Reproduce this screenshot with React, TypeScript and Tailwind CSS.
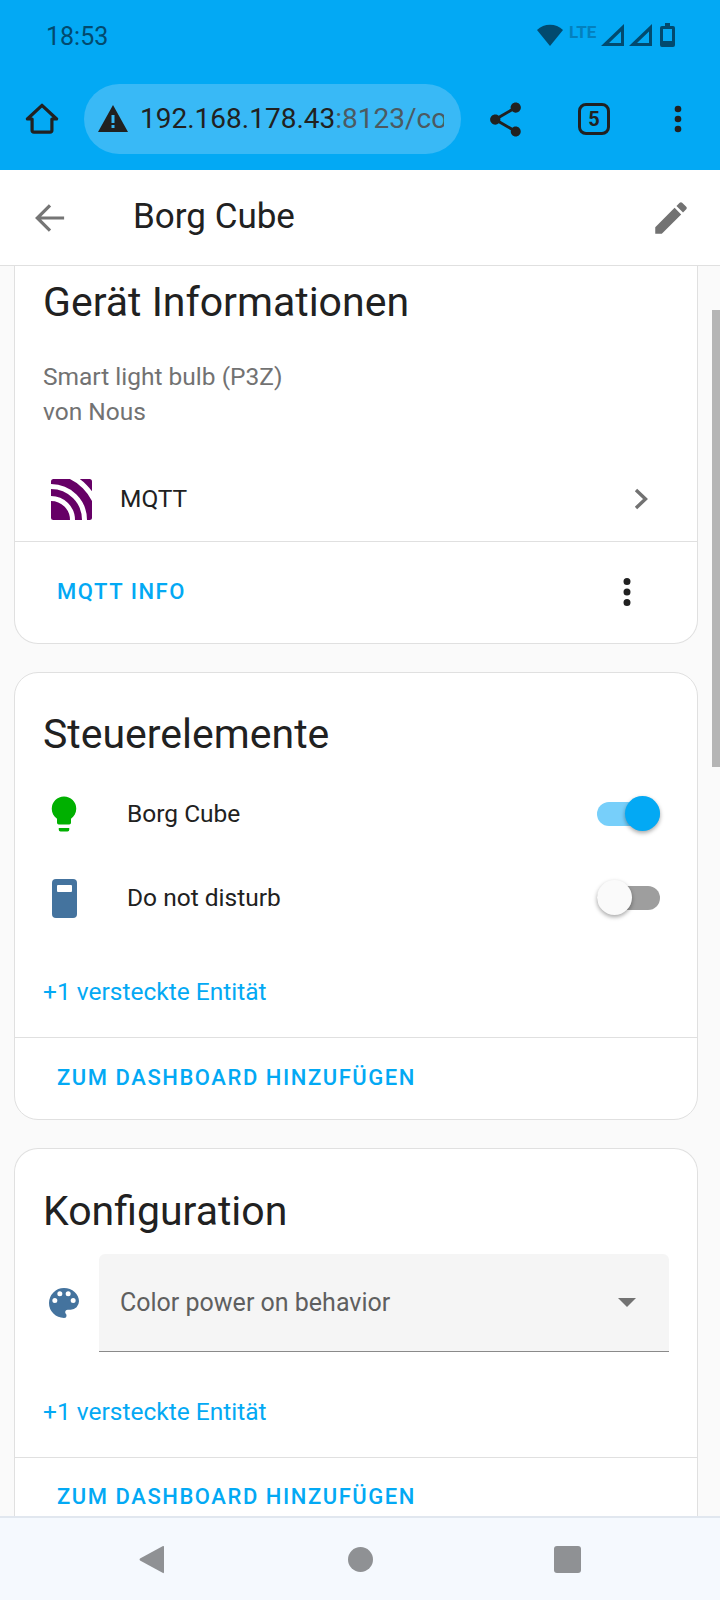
import React from 'react';

const PATHS = {
  share: 'M18 16.08c-.76 0-1.44.3-1.96.77L8.91 12.7c.05-.23.09-.46.09-.7s-.04-.47-.09-.7l7.05-4.11c.54.5 1.25.81 2.04.81 1.66 0 3-1.34 3-3s-1.34-3-3-3-3 1.34-3 3c0 .24.04.47.09.7L8.04 9.81C7.5 9.31 6.79 9 6 9c-1.66 0-3 1.34-3 3s1.34 3 3 3c.79 0 1.5-.31 2.04-.81l7.12 4.16c-.05.21-.08.43-.08.65 0 1.61 1.31 2.92 2.92 2.92 1.61 0 2.92-1.31 2.92-2.92s-1.31-2.92-2.92-2.92z',
  pencil: 'M20.71,7.04C21.1,6.65 21.1,6 20.71,5.63L18.37,3.29C18,2.9 17.35,2.9 16.96,3.29L15.12,5.12L18.87,8.87M3,17.25V21H6.75L17.81,9.93L14.06,6.18L3,17.25Z',
  palette: 'M17.5,12A1.5,1.5 0 0,1 16,10.5A1.5,1.5 0 0,1 17.5,9A1.5,1.5 0 0,1 19,10.5A1.5,1.5 0 0,1 17.5,12M14.5,8A1.5,1.5 0 0,1 13,6.5A1.5,1.5 0 0,1 14.5,5A1.5,1.5 0 0,1 16,6.5A1.5,1.5 0 0,1 14.5,8M9.5,8A1.5,1.5 0 0,1 8,6.5A1.5,1.5 0 0,1 9.5,5A1.5,1.5 0 0,1 11,6.5A1.5,1.5 0 0,1 9.5,8M6.5,12A1.5,1.5 0 0,1 5,10.5A1.5,1.5 0 0,1 6.5,9A1.5,1.5 0 0,1 8,10.5A1.5,1.5 0 0,1 6.5,12M12,3A9,9 0 0,0 3,12A9,9 0 0,0 12,21A1.5,1.5 0 0,0 13.5,19.5C13.5,19.11 13.35,18.76 13.11,18.5C12.88,18.23 12.73,17.88 12.73,17.5A1.5,1.5 0 0,1 14.23,16H16A5,5 0 0,0 21,11C21,6.58 16.97,3 12,3Z',
  bulb: 'M12,2A7,7 0 0,0 5,9C5,11.38 6.19,13.47 8,14.74V17A1,1 0 0,0 9,18H15A1,1 0 0,0 16,17V14.74C17.81,13.47 19,11.38 19,9A7,7 0 0,0 12,2M9,21A1,1 0 0,0 10,22H14A1,1 0 0,0 15,21V20H9V21Z',
  dots: 'M12,16A2,2 0 0,1 14,18A2,2 0 0,1 12,20A2,2 0 0,1 10,18A2,2 0 0,1 12,16M12,10A2,2 0 0,1 14,12A2,2 0 0,1 12,14A2,2 0 0,1 10,12A2,2 0 0,1 12,10M12,4A2,2 0 0,1 14,6A2,2 0 0,1 12,8A2,2 0 0,1 10,6A2,2 0 0,1 12,4Z',
};

function Icon({ d, size, color }: { d: string; size: number; color: string }) {
  return (
    <svg width={size} height={size} viewBox="0 0 24 24" fill={color} className="shrink-0">
      <path d={d} />
    </svg>
  );
}

function SignalIcon() {
  return (
    <svg width="23" height="24" viewBox="0 0 23 24" className="shrink-0">
      <path d="M0 23 L23 1 V23 Z M20 8.5 L8 20 H20 Z" fill="#024a6e" fillRule="evenodd" />
    </svg>
  );
}

function StatusBar() {
  return (
    <div className="h-[72px] flex items-center justify-between pl-[46px] pr-[45px] text-[#024a6e]">
      <span className="text-[25px] mt-[1px]">18:53</span>
      <div className="flex items-center h-[24px] -mt-[3px]">
        <svg width="26" height="22" viewBox="0 0 26 22" className="mr-[6px]">
          <path d="M0 6 C7 -1 19 -1 26 6 L13 22 Z" fill="#024a6e" />
        </svg>
        <span className="text-[17px] font-bold text-[#0480bd] w-[32px] -mt-[4px]">LTE</span>
        <SignalIcon />
        <div className="w-[5px]" />
        <SignalIcon />
        <svg width="15" height="24" viewBox="0 0 15 24" className="ml-[8px]">
          <path d="M5 0 H10 V3 H13 A2 2 0 0 1 15 5 V22 A2 2 0 0 1 13 24 H2 A2 2 0 0 1 0 22 V5 A2 2 0 0 1 2 3 H5 Z M3 6 V18 H12 V6 Z" fill="#024a6e" fillRule="evenodd" />
        </svg>
      </div>
    </div>
  );
}

function BrowserBar() {
  return (
    <div className="h-[98px] flex items-start">
      <div className="w-[84px] h-[70px] mt-[12px] flex items-center justify-center">
        <svg width="34" height="36" viewBox="0 0 36 36" fill="none" stroke="#212121" strokeWidth="3.4" strokeLinejoin="round" strokeLinecap="round">
          <path d="M2.5 18 L18 3.5 L33.5 18 H28.5 V30 A2 2 0 0 1 26.5 32 H9.5 A2 2 0 0 1 7.5 30 V18 Z" />
        </svg>
      </div>
      <div className="w-[377px] h-[70px] mt-[12px] rounded-full bg-[#39b9f6] flex items-center pl-[14px] pr-[13px]">
        <svg width="30" height="28" viewBox="0 0 30 28" className="shrink-0">
          <path d="M15 0 L30 27 H0 Z M13.5 10 V18 H16.5 V10 Z M13.5 20 V23 H16.5 V20 Z" fill="#212121" fillRule="evenodd" />
        </svg>
        <div className="ml-[12px] w-[304px] text-[28px] whitespace-nowrap overflow-hidden text-[#212121]">
          192.168.178.43<span className="text-[#4c5a62]">:8123/co</span>
        </div>
      </div>
      <div className="flex-1 h-[70px] mt-[12px] flex items-center">
        <div className="w-[89px] flex justify-center">
          <Icon d={PATHS.share} size={41} color="#212121" />
        </div>
        <div className="w-[88px] flex justify-center">
          <div className="w-[32px] h-[32px] border-[3px] border-[#212121] rounded-[8px] flex items-center justify-center text-[20px] font-bold text-[#212121]">5</div>
        </div>
        <div className="w-[80px] flex justify-center">
          <Icon d={PATHS.dots} size={40} color="#212121" />
        </div>
      </div>
    </div>
  );
}

function AppBar() {
  return (
    <div className="h-[96px] bg-white border-b border-[#e0e0e0] flex items-center pl-[34px] pr-[28px] shrink-0">
      <svg width="32" height="32" viewBox="0 0 34 34" fill="none" stroke="#757575" strokeWidth="3.4">
        <path d="M32 17 H4 M17 3.5 L3.5 17 L17 30.5" />
      </svg>
      <span className="ml-[67px] flex-1 text-[35px] text-[#212121]">Borg Cube</span>
      <Icon d={PATHS.pencil} size={42} color="#727272" />
    </div>
  );
}

function Title({ children }: { children: React.ReactNode }) {
  return <div className="h-[50px] leading-[50px] text-[41px] text-[#212121] pl-[28px]">{children}</div>;
}

function ActionLink({ children }: { children: React.ReactNode }) {
  return <span className="text-[22px] font-medium tracking-[1.55px] text-[#03a9f4]">{children}</span>;
}

function HiddenLink() {
  return <div className="h-[40px] leading-[40px] pl-[28px] text-[24.5px] text-[#03a9f4]">+1 versteckte Entität</div>;
}

function Switch({ on }: { on: boolean }) {
  return (
    <div className={`relative w-[63px] h-[24px] rounded-full ${on ? 'bg-[#77cffa]' : 'bg-[#9e9e9e]'}`}>
      <div
        className={`absolute -top-[6px] w-[35px] h-[35px] rounded-full shadow-[0_2px_4px_rgba(0,0,0,0.35)] ${on ? 'right-0 bg-[#03a9f4]' : 'left-0 bg-[#fafafa]'}`}
      />
    </div>
  );
}

function EntityRow({ icon, label, on }: { icon: React.ReactNode; label: string; on: boolean }) {
  return (
    <div className="h-[84px] flex items-center pl-[28px] pr-[37px]">
      <div className="w-[42px] flex justify-center">{icon}</div>
      <span className="ml-[42px] flex-1 text-[24.5px] text-[#212121]">{label}</span>
      <Switch on={on} />
    </div>
  );
}

const cardClass = 'ml-[14px] mr-[22px] bg-white border border-[#e0e0e0] overflow-hidden';

export default function App() {
  return (
    <div className="relative w-[720px] h-[1600px] flex flex-col overflow-hidden bg-[#fafafa]" style={{ fontFamily: 'Roboto, sans-serif' }}>
      <div className="bg-[#03a9f4] h-[170px] shrink-0">
        <StatusBar />
        <BrowserBar />
      </div>
      <AppBar />

      <div className="flex-1 min-h-0 overflow-hidden flex flex-col gap-[28px]">
        {/* Device info */}
        <div className={`${cardClass} border-t-0 rounded-b-[24px] shrink-0`}>
          <div className="pt-[11px]">
            <Title>Gerät Informationen</Title>
          </div>
          <div className="mt-[32px] pl-[28px] text-[24.5px] leading-[35px] text-[#727272]">
            <div>Smart light bulb (P3Z)</div>
            <div>von Nous</div>
          </div>
          <div className="h-[84px] mt-[28px] flex items-center pl-[36px] pr-[49px]">
            <svg width="41" height="41" viewBox="0 0 41 41" className="shrink-0">
              <defs>
                <clipPath id="mqtt-box">
                  <rect width="41" height="41" rx="2.5" />
                </clipPath>
              </defs>
              <g clipPath="url(#mqtt-box)">
                <rect width="41" height="41" fill="#660066" />
                <g fill="none" stroke="#ffffff" strokeWidth="5">
                  <circle cx="0" cy="41" r="21.5" />
                  <circle cx="0" cy="41" r="33.5" />
                  <circle cx="0" cy="41" r="47.5" />
                </g>
              </g>
            </svg>
            <span className="ml-[28px] flex-1 text-[24.5px] text-[#212121]">MQTT</span>
            <svg width="14" height="22" viewBox="0 0 14 22" fill="none" stroke="#727272" strokeWidth="3.4">
              <path d="M2 2 L11.5 11 L2 20" />
            </svg>
          </div>
          <div className="h-[102px] border-t border-[#e0e0e0] flex items-center justify-between pb-[2px] pl-[42px] pr-[49px]">
            <ActionLink>MQTT INFO</ActionLink>
            <Icon d={PATHS.dots} size={42} color="#212121" />
          </div>
        </div>

        {/* Controls */}
        <div className={`${cardClass} rounded-[24px] shrink-0`}>
          <div className="pt-[36px]">
            <Title>Steuerelemente</Title>
          </div>
          <div className="mt-[13px]">
            <EntityRow icon={<Icon d={PATHS.bulb} size={42} color="#00b000" />} label="Borg Cube" on />
            <EntityRow
              icon={
                <div className="w-[25px] h-[39px] rounded-[4px] bg-[#44739e] flex justify-center pt-[6px]">
                  <div className="w-[15px] h-[7px] rounded-[1px] bg-white" />
                </div>
              }
              label="Do not disturb"
              on={false}
            />
          </div>
          <div className="mt-[32px]">
            <HiddenLink />
          </div>
          <div className="h-[82px] mt-[25px] border-t border-[#e0e0e0] flex items-center pb-[2px] pl-[42px]">
            <ActionLink>ZUM DASHBOARD HINZUFÜGEN</ActionLink>
          </div>
        </div>

        {/* Configuration */}
        <div className={`${cardClass} rounded-t-[24px] border-b-0 shrink-0`}>
          <div className="pt-[37px]">
            <Title>Konfiguration</Title>
          </div>
          <div className="mt-[18px] flex items-center pl-[28px] pr-[28px]">
            <div className="w-[42px] flex justify-center">
              <Icon d={PATHS.palette} size={40} color="#44739e" />
            </div>
            <div className="ml-[14px] flex-1 h-[98px] bg-[#f5f5f5] rounded-t-[6px] border-b border-[#8a8a8a] flex items-center justify-between pl-[21px] pr-[33px]">
              <span className="text-[25px] text-[#5f5f5f]">Color power on behavior</span>
              <svg width="18" height="9" viewBox="0 0 18 9">
                <path d="M0 0 H18 L9 9 Z" fill="#727272" />
              </svg>
            </div>
          </div>
          <div className="mt-[40px]">
            <HiddenLink />
          </div>
          <div className="h-[80px] mt-[25px] border-t border-[#e0e0e0] flex items-start pt-[22px] pl-[42px]">
            <ActionLink>ZUM DASHBOARD HINZUFÜGEN</ActionLink>
          </div>
        </div>
      </div>

      {/* scrollbar overlay */}
      <div className="absolute left-[712px] top-[310px] w-[8px] h-[457px] bg-[#b5b5b5]" />

      {/* Android nav bar */}
      <div className="h-[84px] shrink-0 bg-[#f5f9fe] border-t-2 border-[#e1e7ef] flex items-center pl-[139px]">
        <svg width="25" height="29" viewBox="0 0 25 29">
          <path d="M24 1 Q25 0.5 25 2 V27 Q25 28.5 24 28 L1 15.5 Q0 14.5 1 13.5 Z" fill="#8f9194" />
        </svg>
        <div className="w-[25px] h-[25px] ml-[184px] rounded-full bg-[#8f9194]" />
        <div className="w-[27px] h-[27px] ml-[181px] rounded-[3px] bg-[#8f9194]" />
      </div>
    </div>
  );
}
